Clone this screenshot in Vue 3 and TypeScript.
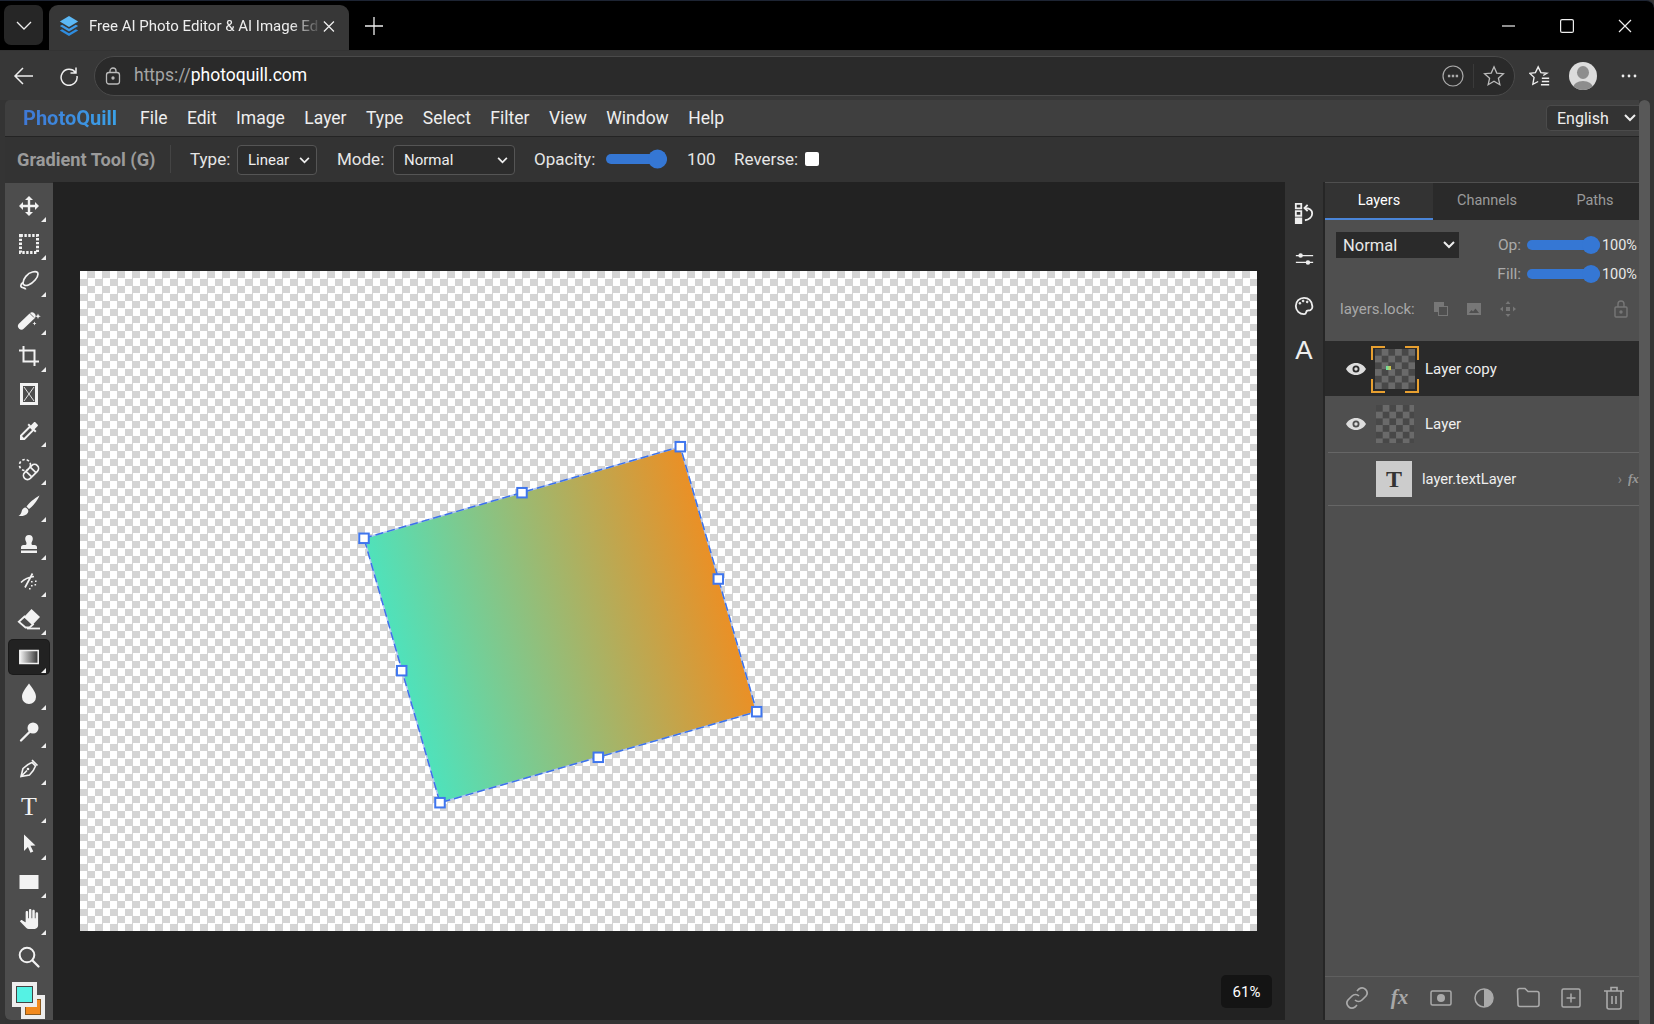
<script setup lang="ts">
interface Tool { name: string; svg: string; more: boolean; active?: boolean }

const S = 'fill="none" stroke="currentColor"'
const tools: Tool[] = [
  { name: 'move', more: true, svg: '<path d="M12 2l4 4h-2.800v4.800H18V8l4 4-4 4v-2.800h-4.800V18H16l-4 4-4-4h2.800v-4.800H6V16l-4-4 4-4v2.800h4.800V6H8z"/>' },
  { name: 'marquee', more: true, svg: `<rect x="3.500" y="3.500" width="17" height="17" ${S} stroke-width="3" stroke-dasharray="2.400 1.500"/>` },
  { name: 'lasso', more: true, svg: `<path ${S} stroke-width="1.700" d="M21 5c0 3.500-4.500 9-9.500 11-2.500 1-5.500.5-5.500-2 0-4 4.500-10 9.500-11 3.500-.7 5.500-.2 5.500 2zM6 13.500c-2.500 1.500-3 4.500-.5 5 1.500.3 3 .5 3 2"/>` },
  { name: 'wand', more: true, svg: '<path d="M4.500 19L15 9" fill="none" stroke="currentColor" stroke-width="7" stroke-linecap="round"/><path d="M12.500 6l4.500 4.500" fill="none" stroke="#4d4d4d" stroke-width=".8"/><path d="M21 6.500l.8 2 2 .8-2 .8-.8 2-.8-2-2-.8 2-.8zM17.500 14.500l.6 1.400 1.400.6-1.400.6-.6 1.400-.6-1.400-1.400-.6 1.400-.6z"/>' },
  { name: 'crop', more: true, svg: `<path ${S} stroke-width="2" d="M6.500 2v15.500H22M2 6.500h15.500V22"/>` },
  { name: 'frame', more: false, svg: '<path fill-rule="evenodd" d="M3 1h18v22H3zM6 4v16h12V4z"/><path fill="none" stroke="currentColor" stroke-width=".9" d="M7 5l10 14M17 5L7 19"/>' },
  { name: 'dropper', more: true, svg: '<path d="M20.710 5.630l-2.340-2.340c-.39-.39-1.020-.39-1.410 0l-3.120 3.120-1.930-1.910-1.410 1.410 1.420 1.420L3 16.250V21h4.750l8.920-8.920 1.420 1.420 1.410-1.410-1.920-1.920 3.120-3.120c.4-.4.4-1.030.01-1.420zM6.920 19L5 17.080l8.060-8.060 1.920 1.920L6.920 19z"/>' },
  { name: 'heal', more: true, svg: `<circle cx="8" cy="8" r="5.500" ${S} stroke-width="1.700" stroke-dasharray="2.500 2"/><g transform="rotate(-45 14 15)"><rect x="5" y="11" width="18" height="8" rx="4" ${S} stroke-width="1.700"/><path ${S} stroke-width="1.700" d="M11 11v8M17 11v8"/></g>` },
  { name: 'brush', more: true, svg: '<path d="M22.500 1.500C17 4.500 12 9 9.500 12.500l2.500 2.500c3.500-2.500 8-7.500 10.500-13.500zM8.500 13.500c-3 .5-3.500 2.500-4 4.500-.3 1.500-1.500 3-3 4 3.500.5 8-.5 9.500-3.500.8-1.800.2-3.800-2.500-5z"/>' },
  { name: 'stamp', more: true, svg: '<path d="M12 3a3.800 3.800 0 0 0-3.800 3.800c0 2.200 1.300 3 1.300 4.700 0 1-.7 1.500-1.500 1.500H6.500A2.500 2.500 0 0 0 4 15.500V17h16v-1.500a2.500 2.500 0 0 0-2.500-2.500H16c-.8 0-1.500-.5-1.500-1.500 0-1.700 1.300-2.500 1.300-4.700A3.800 3.800 0 0 0 12 3zM4 18.500h16V21H4z"/>' },
  { name: 'history', more: true, svg: `<path ${S} stroke-width="1.700" d="M4 13.500c3.500-3.500 8-5.500 13-6M8 18.500L15.500 4.500"/><path d="M14 12h1.600v1.600H14zM18 11.500h1.600v1.600H18zM14 16h1.600v1.600H14zM17.500 15h1.600v1.600h-1.600zM12 19h1.600v1.600H12z"/>` },
  { name: 'eraser', more: true, svg: `<path d="M14.500 2l8.500 8-7 7.500L7.500 9.500z"/><path ${S} stroke-width="1.800" d="M7.500 9.500L16 17.500 12.500 20.500H8.500L1.800 14.800z"/><path ${S} stroke-width="1.800" d="M10 21.500h13"/>` },
  { name: 'gradient', more: true, active: true, svg: '<defs><linearGradient id="gt"><stop offset="0" stop-color="#f4f4f4"/><stop offset="1" stop-color="#333"/></linearGradient></defs><rect x="2.800" y="5.500" width="18.400" height="13" fill="url(#gt)" stroke="currentColor" stroke-width="1.500"/>' },
  { name: 'drop', more: true, svg: '<path d="M12 1.500C8 7 5 10.500 5 15a7 7 0 0 0 14 0c0-4.500-3-8-7-13.500z"/>' },
  { name: 'dodge', more: true, svg: `<circle cx="16" cy="8" r="5.500"/><path ${S} stroke-width="2.300" stroke-linecap="round" d="M13 11.500L4 20.500"/>` },
  { name: 'pen', more: true, svg: `<path ${S} stroke-width="1.600" d="M4 19.500l2-8c3-3 6-5 9-6l3.500 3.500c-1 3-3 6-6 9zM4 19.500l6-6M15 3l5.500 5.500"/><circle cx="11" cy="12" r="1.300" fill="currentColor"/>` },
  { name: 'type', more: true, svg: '<text x="12" y="20" text-anchor="middle" class="tool-t">T</text>' },
  { name: 'select', more: true, svg: '<path d="M7 2.500L18.500 13.500l-5 .3 2.800 5.700-2.800 1.300-2.600-5.800L7 19z"/>' },
  { name: 'rect', more: true, svg: '<rect x="2.500" y="5" width="19" height="14"/>' },
  { name: 'hand', more: true, svg: '<g transform="translate(2 2) scale(.83)"><path d="M23 5.500V20c0 2.200-1.800 4-4 4h-7.300c-1.080 0-2.100-.43-2.850-1.190L1 14.830s1.260-1.230 1.300-1.250c.22-.19.49-.29.79-.29.22 0 .42.06.6.16.04.01 4.310 2.460 4.310 2.460V4c0-.83.67-1.500 1.500-1.500S11 3.170 11 4v7h1V1.500c0-.83.67-1.500 1.500-1.500S15 .67 15 1.500V11h1V2.500c0-.83.67-1.500 1.500-1.500s1.500.67 1.500 1.500V11h1V5.500c0-.83.67-1.500 1.500-1.500s1.500.67 1.500 1.500z"/></g>' },
  { name: 'zoom', more: false, svg: `<circle cx="10" cy="10" r="7.300" ${S} stroke-width="2"/><path ${S} stroke-width="2.300" stroke-linecap="round" d="M15.500 15.500l6 6"/>` },
]

const menus = ['File', 'Edit', 'Image', 'Layer', 'Type', 'Select', 'Filter', 'View', 'Window', 'Help']

// Free-canvas geometry of the transformed layer, in canvas coordinates.
const corners = [[284, 267.3], [600.3, 175.7], [676.7, 440.7], [360, 531.7]]
const mids = [[442, 221.7], [638.3, 308], [518.3, 486.3], [321.7, 399.7]]
const outline = corners.map((p) => p.join(',')).join(' ')
const handles = [...corners, ...mids]
</script>

<template>
  <div class="screen">
    <header class="titlebar">
      <div class="tab-switch">
        <svg width="16" height="16" viewBox="0 0 16 16" fill="none" stroke="#eee" stroke-width="1.300"><path d="M1 5l7 7 7-7" /></svg>
      </div>
      <div class="tab">
        <svg class="favicon" width="22" height="22" viewBox="0 0 24 24">
          <path d="M12 1L2 7l10 6 10-6z" fill="#5cb8f5" />
          <path d="M4.500 10.500L2 12l10 6 10-6-2.500-1.500L12 15z" fill="#3f9be8" />
          <path d="M4.500 15.500L2 17l10 6 10-6-2.500-1.500L12 20z" fill="#2f8de0" />
        </svg>
        <span class="tab-title">Free AI Photo Editor &amp; AI Image Ed</span>
        <svg width="13" height="13" viewBox="0 0 13 13" stroke="#eee" stroke-width="1.400"><path d="M1 1l11 11M12 1L1 12" /></svg>
      </div>
      <svg class="new-tab" width="20" height="20" viewBox="0 0 20 20" stroke="#eee" stroke-width="1.300"><path d="M10 1v18M1 10h18" /></svg>
      <div class="win-controls">
        <svg width="14" height="14" viewBox="0 0 14 14" stroke="#eee" stroke-width="1.200"><path d="M0 7h13" /></svg>
        <svg width="14" height="14" viewBox="0 0 14 14" fill="none" stroke="#eee" stroke-width="1.200"><rect x=".6" y=".6" width="12.800" height="12.800" rx="1.500" /></svg>
        <svg width="14" height="14" viewBox="0 0 14 14" stroke="#eee" stroke-width="1.200"><path d="M1 1l12 12M13 1L1 13" /></svg>
      </div>
    </header>

    <nav class="addressbar">
      <svg class="nav-icon" width="22" height="22" viewBox="0 0 22 22" fill="none" stroke="#eee" stroke-width="1.500"><path d="M20 11H2M10 3l-8 8 8 8" /></svg>
      <svg class="nav-icon" width="20" height="20" viewBox="0 0 20 20" fill="none" stroke="#eee" stroke-width="1.500"><path d="M16.500 6.500A8 8 0 1 0 18 10M17 1.500v5.500h-5.500" /></svg>
      <div class="url-pill">
        <svg width="16" height="18" viewBox="0 0 16 18" fill="none" stroke="#bbb" stroke-width="1.300"><rect x="1.500" y="5.500" width="13" height="11.500" rx="2.500" /><path d="M5 5.500V4a3 3 0 0 1 6 0v1.500" /><circle cx="8" cy="11" r="1" fill="#bbb" /></svg>
        <span class="url"><span class="url-dim">https://</span>photoquill.com</span>
        <svg class="pill-more" width="22" height="22" viewBox="0 0 22 22" fill="none" stroke="#aaa" stroke-width="1.200"><circle cx="11" cy="11" r="10" /><path d="M6.500 10.400h1.200v1.200H6.500zM10.400 10.400h1.200v1.200h-1.200zM14.300 10.400h1.200v1.200h-1.200z" /></svg>
        <span class="pill-sep"></span>
        <svg width="22" height="22" viewBox="0 0 24 24" fill="none" stroke="#bbb" stroke-width="1.400"><path d="M12 2l3 6.800 7.300.7-5.500 4.900 1.600 7.200L12 17.800l-6.400 3.800 1.600-7.200L1.700 9.500 9 8.800z" /></svg>
      </div>
      <div class="addr-right">
        <svg width="22" height="22" viewBox="0 0 24 24" fill="none" stroke="#eee" stroke-width="1.500"><path d="M15.500 11.500L19.500 9l-6.500-.7L10 2 7 8.300.8 9l4.700 4.500L4.200 21l5.800-3M14 14.500h8M14 18h8M13 21.500h9" /></svg>
        <div class="avatar"><span class="avatar-head"></span><span class="avatar-body"></span></div>
        <svg class="more-dots" width="16" height="6" viewBox="0 0 16 6" fill="#eee"><circle cx="2" cy="3" r="1.400" /><circle cx="8" cy="3" r="1.400" /><circle cx="14" cy="3" r="1.400" /></svg>
      </div>
    </nav>

    <div class="page">
      <main class="editor">
        <div class="menubar">
          <span class="logo">PhotoQuill</span>
          <span v-for="m in menus" :key="m" class="menu-item">{{ m }}</span>
          <div class="lang">
            <span>English</span>
            <svg width="12" height="8" viewBox="0 0 12 8" fill="none" stroke="#eee" stroke-width="2"><path d="M1 1l5 5 5-5" /></svg>
          </div>
        </div>

        <div class="optionsbar">
          <span class="tool-name">Gradient Tool (G)</span>
          <span class="opt-sep"></span>
          <span class="opt-label type-label">Type:</span>
          <div class="opt-select select-type">
            <span>Linear</span>
            <svg width="11" height="7" viewBox="0 0 12 8" fill="none" stroke="#eee" stroke-width="2"><path d="M1 1l5 5 5-5" /></svg>
          </div>
          <span class="opt-label mode-label">Mode:</span>
          <div class="opt-select select-mode">
            <span>Normal</span>
            <svg width="11" height="7" viewBox="0 0 12 8" fill="none" stroke="#eee" stroke-width="2"><path d="M1 1l5 5 5-5" /></svg>
          </div>
          <span class="opt-label opacity-label">Opacity:</span>
          <div class="slider slider-opt"><span class="thumb"></span></div>
          <span class="opt-label opacity-value">100</span>
          <span class="opt-label reverse-label">Reverse:</span>
          <span class="checkbox"></span>
        </div>

        <div class="workspace">
          <aside class="toolbox">
            <div class="tool-list">
              <div v-for="t in tools" :key="t.name" class="tool" :class="{ active: t.active, more: t.more }">
                <svg width="24" height="24" viewBox="0 0 24 24" fill="currentColor" v-html="t.svg"></svg>
              </div>
            </div>
            <div class="swatches">
              <span class="swatch swatch-bg"><i></i></span>
              <span class="swatch swatch-fg"><i></i></span>
            </div>
          </aside>

          <section class="stage">
            <div class="canvas">
              <svg class="layer-art" width="1177" height="660" viewBox="0 0 1177 660">
                <defs>
                  <linearGradient id="art" gradientUnits="userSpaceOnUse" x1="321.700" y1="399.700" x2="638.300" y2="308">
                    <stop offset="0" stop-color="#4fe2bb" />
                    <stop offset="1" stop-color="#ea9026" />
                  </linearGradient>
                </defs>
                <polygon :points="outline" fill="url(#art)" stroke="#b4c8f5" stroke-width="1.500" />
                <polygon :points="outline" fill="none" stroke="#3d72e8" stroke-width="1.500" stroke-dasharray="8 4" />
                <rect v-for="(h, i) in handles" :key="i" :x="h[0] - 4.750" :y="h[1] - 4.750" width="9.500" height="9.500" fill="#fff" stroke="#3f76ee" stroke-width="2" />
              </svg>
            </div>
            <div class="zoom-badge">61%</div>
          </section>

          <aside class="dock">
            <svg width="20" height="24" viewBox="0 0 22 24" fill="currentColor">
              <path fill-rule="evenodd" d="M1 1h8v7H1zM3 3v3h4V3zM1 9h8v7H1zM3 11v3h4v-3zM1 17h8v7H1z" />
              <path fill="none" stroke="currentColor" stroke-width="2" d="M15 3l-3.500 3.500L15 10M12 6.500c5 0 8 2.500 8 6s-3 7-8 7.500" />
            </svg>
            <svg width="19" height="18" viewBox="0 0 22 18" fill="currentColor" stroke="currentColor" stroke-width="1.500">
              <path d="M1 5h20M1 13h20" />
              <circle cx="6.500" cy="5" r="2.600" stroke="none" />
              <circle cx="15" cy="13" r="2.600" stroke="none" />
            </svg>
            <svg class="dock-palette" width="20" height="20" viewBox="0 0 22 22" fill="none" stroke="currentColor" stroke-width="2">
              <path d="M11 2a9 9 0 1 0 0 18c3 0 2-2.500 3-3.500 1-1 2.500-.5 4-1 2-1 2.500-3 2-5C19.200 5 16 2 11 2z" />
              <circle cx="6.500" cy="8" r="1" fill="currentColor" stroke-width="1" />
              <circle cx="10" cy="5.500" r="1" fill="currentColor" stroke-width="1" />
              <circle cx="14.500" cy="6.500" r="1" fill="currentColor" stroke-width="1" />
            </svg>
            <span class="dock-a">A</span>
          </aside>

          <aside class="panel">
            <div class="tabs">
              <span class="ptab active">Layers</span>
              <span class="ptab">Channels</span>
              <span class="ptab">Paths</span>
            </div>

            <div class="blend">
              <div class="blend-select">
                <span>Normal</span>
                <svg width="12" height="8" viewBox="0 0 12 8" fill="none" stroke="#eee" stroke-width="2"><path d="M1 1l5 5 5-5" /></svg>
              </div>
              <div class="blend-sliders">
                <div class="bs-row">
                  <span class="bs-label">Op:</span>
                  <div class="slider slider-panel"><span class="thumb"></span></div>
                  <span class="bs-value">100%</span>
                </div>
                <div class="bs-row">
                  <span class="bs-label">Fill:</span>
                  <div class="slider slider-panel"><span class="thumb"></span></div>
                  <span class="bs-value">100%</span>
                </div>
              </div>
            </div>

            <div class="locks">
              <span class="lock-label">layers.lock:</span>
              <svg width="16" height="16" viewBox="0 0 16 16" fill="#777"><path d="M1 1h10v4h4v10H5v-4H1zM6 6v8h8V6z" /></svg>
              <svg width="16" height="16" viewBox="0 0 16 16" fill="#777"><path fill-rule="evenodd" d="M1 2h14v12H1zM3 12h10L9.500 7.500 7 10.500 5.500 9z" /></svg>
              <svg width="18" height="18" viewBox="0 0 18 18" fill="#777"><path d="M9 1l2.500 3h-5zM9 17l-2.500-3h5zM1 9l3-2.500v5zM17 9l-3 2.500v-5zM7 7h4v4H7z" /></svg>
              <svg class="lock-end" width="14" height="18" viewBox="0 0 14 18" fill="none" stroke="#777" stroke-width="1.400"><rect x="1" y="7" width="12" height="10" rx="1" /><path d="M4 7V4a3 3 0 0 1 6 0v3" /><circle cx="7" cy="12" r="1" fill="#777" /></svg>
            </div>

            <div class="layers">
              <div class="layer selected">
                <svg class="eye" width="20" height="14" viewBox="0 0 20 14" fill="#ddd"><path fill-rule="evenodd" d="M10 1C5.500 1 2 3.500 0 7c2 3.500 5.500 6 10 6s8-2.500 10-6c-2-3.500-5.500-6-10-6zm0 2.500a3.500 3.500 0 1 1 0 7 3.500 3.500 0 0 1 0-7zm0 1.800a1.700 1.700 0 1 0 0 3.400 1.700 1.700 0 0 0 0-3.400z" /></svg>
                <div class="thumb-wrap">
                  <span class="bracket tl"></span><span class="bracket tr"></span><span class="bracket bl"></span><span class="bracket br"></span>
                  <div class="layer-thumb"><span class="mini-art"></span></div>
                </div>
                <span class="layer-name">Layer copy</span>
              </div>
              <div class="layer plain">
                <svg class="eye" width="20" height="14" viewBox="0 0 20 14" fill="#ddd"><path fill-rule="evenodd" d="M10 1C5.500 1 2 3.500 0 7c2 3.500 5.500 6 10 6s8-2.500 10-6c-2-3.500-5.500-6-10-6zm0 2.500a3.500 3.500 0 1 1 0 7 3.500 3.500 0 0 1 0-7zm0 1.800a1.700 1.700 0 1 0 0 3.400 1.700 1.700 0 0 0 0-3.400z" /></svg>
                <div class="thumb-wrap"><div class="layer-thumb small"></div></div>
                <span class="layer-name">Layer</span>
              </div>
              <div class="layer text-layer">
                <span class="eye-gap"></span>
                <div class="t-thumb">T</div>
                <span class="layer-name t-name">layer.textLayer</span>
                <span class="chev">›</span>
                <span class="fx-tag">fx</span>
              </div>
            </div>

            <div class="panel-foot">
              <svg width="24" height="24" viewBox="0 0 24 24" fill="none" stroke="currentColor" stroke-width="1.700"><path d="M10 14a5 5 0 0 0 7 0l4-4a5 5 0 0 0-7-7l-2 2M14 10a5 5 0 0 0-7 0l-4 4a5 5 0 0 0 7 7l2-2" /></svg>
              <span class="foot-fx">fx</span>
              <svg width="22" height="16" viewBox="0 0 22 16" fill="none" stroke="currentColor" stroke-width="1.500"><rect x="1" y="1" width="20" height="14" rx="1.500" /><circle cx="11" cy="8" r="4" fill="currentColor" stroke="none" /></svg>
              <svg width="20" height="20" viewBox="0 0 20 20"><circle cx="10" cy="10" r="9" fill="none" stroke="currentColor" stroke-width="1.500" /><path d="M10 1a9 9 0 0 1 0 18z" fill="currentColor" /></svg>
              <svg width="24" height="21" viewBox="0 0 24 21" fill="none" stroke="currentColor" stroke-width="1.600"><path d="M1.500 3.500a2 2 0 0 1 2-2h5.500l3 3h9a2 2 0 0 1 2 2v11a2 2 0 0 1-2 2h-17a2 2 0 0 1-2-2z" /></svg>
              <svg width="20" height="20" viewBox="0 0 20 20" fill="none" stroke="currentColor" stroke-width="1.500"><rect x="1" y="1" width="18" height="18" rx="1.500" /><path d="M10 5.500v9M5.500 10h9" /></svg>
              <svg width="22" height="24" viewBox="0 0 22 24" fill="none" stroke="currentColor" stroke-width="1.600"><path d="M1 5h20M8 5V1.500h6V5M4 5v16a2 2 0 0 0 2 2h10a2 2 0 0 0 2-2V5M9 10v8M13 10v8" /></svg>
            </div>
          </aside>
        </div>
      </main>
      <div class="scroll-track"></div>
    </div>
  </div>
</template>

<style>
html, body { margin: 0; background: #333; }
</style>

<style scoped>
.screen {
  width: 1654px;
  height: 1024px;
  display: flex;
  flex-direction: column;
  overflow: hidden;
  background: #343434;
  font-family: Roboto, "Liberation Sans", sans-serif;
  color: #eee;
}

/* Browser chrome */
.titlebar {
  flex: 0 0 50px;
  box-sizing: border-box;
  display: flex;
  align-items: flex-start;
  background: #000;
  padding: 5px 0 0 4px;
  border-top: 1px solid #1d2433;
  border-top-right-radius: 8px;
}
.tab-switch {
  width: 39px;
  height: 40px;
  margin-top: -1px;
  display: flex;
  align-items: center;
  justify-content: center;
  background: #262626;
  border-radius: 7px;
}
.tab {
  width: 300px;
  height: 45px;
  margin: -1px 0 0 6px;
  box-sizing: border-box;
  display: flex;
  align-items: center;
  padding: 0 14px 3px 9px;
  background: #373737;
  border-radius: 9px 9px 0 0;
  font-size: 15px;
}
.favicon { flex: none; margin-right: 9px; }
.tab-title {
  flex: 1;
  white-space: nowrap;
  margin-right: 5px;
  -webkit-mask-image: linear-gradient(90deg, #000 88%, rgba(0, 0, 0, .15));
  mask-image: linear-gradient(90deg, #000 88%, rgba(0, 0, 0, .15));
}
.new-tab { margin: 10px 0 0 15px; }
.win-controls {
  margin-left: auto;
  display: flex;
  gap: 44px;
  padding: 13px 22px 0 0;
}

.addressbar {
  flex: 0 0 50px;
  box-sizing: border-box;
  display: flex;
  align-items: center;
  padding: 0 17px 0 13px;
  background: #373737;
  border-top: 1px solid #333;
}
.nav-icon { flex: none; margin-right: 24px; }
.nav-icon + .nav-icon { margin-right: 15px; }
.url-pill {
  flex: 1;
  height: 40px;
  box-sizing: border-box;
  display: flex;
  align-items: center;
  gap: 13px;
  padding: 0 9px 2px 10px;
  background: #2a2a2a;
  border: 1px solid #4a4a4a;
  border-radius: 20px;
}
.url-pill > svg { margin-top: 2px; }
.url { font-size: 17.500px; color: #fff; }
.url-dim { color: #a5a5a5; }
.pill-more { margin-left: auto; }
.pill-sep { width: 1px; height: 24px; margin: 2px -4px 0; background: #3a3a3a; }
.addr-right {
  display: flex;
  align-items: center;
  gap: 18px;
  margin-left: 14px;
}
.more-dots { margin-left: 6px; }
.avatar {
  width: 28px;
  height: 28px;
  border-radius: 50%;
  background: #dcdcdc;
  position: relative;
  overflow: hidden;
}
.avatar-head {
  position: absolute;
  left: 8px;
  top: 4px;
  width: 12px;
  height: 13px;
  border-radius: 50%;
  background: #8d8d8d;
}
.avatar-body {
  position: absolute;
  left: 4px;
  top: 19px;
  width: 20px;
  height: 14px;
  border-radius: 50%;
  background: #8d8d8d;
}

/* Page */
.page {
  flex: 1;
  min-height: 0;
  display: flex;
  padding: 0 4px 0 5px;
  background: #343434;
}
.editor {
  flex: 1;
  min-width: 0;
  display: flex;
  flex-direction: column;
}
.scroll-track {
  flex: 0 0 11px;
  background: #585858;
  border-radius: 6px 6px 0 0;
}

.menubar {
  flex: 0 0 37px;
  box-sizing: border-box;
  display: flex;
  align-items: center;
  padding-left: 18px;
  background: #3f3f3f;
  border-bottom: 1px solid #242424;
  font-size: 17.500px;
  border-top-left-radius: 5px;
}
.logo {
  width: 98px;
  margin-right: 19px;
  font-size: 20px;
  font-weight: 700;
  white-space: nowrap;
  background: linear-gradient(90deg, #3f78d6, #3aa3e8);
  -webkit-background-clip: text;
  background-clip: text;
  color: transparent;
}
.menu-item { margin-right: 19.500px; }
.lang {
  margin-left: auto;
  width: 93px;
  height: 26px;
  box-sizing: border-box;
  display: flex;
  align-items: center;
  justify-content: space-between;
  padding: 0 3px 0 10px;
  background: #333;
  border: 1px solid #4b4b4b;
  border-right: 0;
  border-radius: 5px 0 0 5px;
  font-size: 16px;
}

.optionsbar {
  flex: 0 0 45px;
  box-sizing: border-box;
  display: flex;
  align-items: center;
  padding: 0 0 1px 12px;
  background: #333;
  font-size: 17px;
}
.tool-name { font-weight: 700; font-size: 18.200px; color: #9b9b9b; white-space: nowrap; width: 140px; }
.opt-sep { width: 1px; height: 28px; background: #444; margin: 0 19px 0 13px; }
.opt-label { white-space: nowrap; color: #e6e6e6; }
.opt-select {
  height: 30px;
  margin-top: 2px;
  box-sizing: border-box;
  display: flex;
  align-items: center;
  justify-content: space-between;
  padding: 0 6px 0 10px;
  background: #2c2c2c;
  border: 1px solid #555;
  border-radius: 4px;
  font-size: 15px;
}
.type-label { width: 47px; }
.select-type { width: 80px; margin-right: 20px; }
.mode-label { width: 56px; }
.select-mode { width: 122px; margin-right: 19px; }
.opacity-label { width: 72px; }
.slider {
  position: relative;
  border-radius: 6px;
  background: #3577d4;
}
.thumb {
  position: absolute;
  right: 0;
  top: 50%;
  transform: translateY(-50%);
  border-radius: 50%;
  background: #3577d4;
}
.slider-opt { width: 61px; height: 10px; }
.slider-opt .thumb { width: 19px; height: 19px; }
.opacity-value { margin-left: 20px; width: 47px; }
.reverse-label { width: 71px; }
.checkbox {
  width: 14px;
  height: 14px;
  background: #fff;
  border-radius: 2px;
}

.workspace {
  flex: 1;
  min-height: 0;
  display: flex;
  padding-bottom: 4px;
  background: #333;
}

/* Left tools */
.toolbox {
  flex: 0 0 48px;
  box-sizing: border-box;
  display: flex;
  flex-direction: column;
  margin-top: 1px;
  padding: 6px 4px 0;
  background: #4d4d4d;
  border-radius: 0 0 0 6px;
}
.tool-list {
  display: flex;
  flex-direction: column;
  gap: 3.550px;
}
.tool {
  position: relative;
  height: 34px;
  display: flex;
  align-items: center;
  justify-content: center;
  color: #f2f2f2;
  border-radius: 4px;
}
.tool svg { overflow: visible; }
.tool.active { background: #222; box-shadow: 0 0 0 1px #1a1a1a; }
.tool.more::after {
  content: "";
  position: absolute;
  right: 3px;
  bottom: 1px;
  border-style: solid;
  border-width: 0 0 5px 5px;
  border-color: transparent transparent #eee transparent;
}
.tool :deep(.tool-t) { font: 400 26px "Liberation Serif", serif; fill: currentColor; }
.swatches { position: relative; height: 38px; margin-top: 8px; }
.swatch {
  position: absolute;
  width: 24px;
  height: 24px;
  box-sizing: border-box;
  padding: 4px;
  background: #eee;
}
.swatch i { display: block; width: 100%; height: 100%; border: 1px solid #444; box-sizing: border-box; }
.swatch-fg { left: 3px; top: 0; width: 25px; height: 25px; }
.swatch-fg i { background: #55f2e4; }
.swatch-bg { left: 12px; top: 13px; }
.swatch-bg i { background: #f28a1e; border-color: #8a5a20; }

/* Canvas */
.stage {
  flex: 1;
  min-width: 0;
  position: relative;
  box-sizing: border-box;
  padding: 89px 0 0 27px;
  background: #222;
}
.canvas {
  position: relative;
  width: 1177px;
  height: 660px;
  background: repeating-conic-gradient(#d4d4d4 0 25%, #fff 0 50%) 0 0 / 15px 15px;
}
.layer-art { position: absolute; left: 0; top: 0; }
.zoom-badge {
  position: absolute;
  right: 13px;
  bottom: 12px;
  width: 51px;
  height: 33px;
  display: flex;
  align-items: center;
  justify-content: center;
  background: #141414;
  border-radius: 5px;
  font-size: 15px;
  color: #fff;
}

/* Dock */
.dock {
  flex: 0 0 40px;
  box-sizing: border-box;
  display: flex;
  flex-direction: column;
  align-items: center;
  padding-top: 19px;
  gap: 25px;
  background: #333;
  border-right: 2px solid #262626;
  color: #eee;
}
.dock-palette { margin-top: 3px; }
.dock-a { font: 400 26px/26px "Liberation Sans", sans-serif; margin-top: -4px; }

/* Panel */
.panel {
  flex: 0 0 314px;
  min-width: 0;
  overflow: hidden;
  display: flex;
  flex-direction: column;
  background: #4f4f4f;
  color: #e8e8e8;
}
.tabs {
  flex: 0 0 37px;
  display: flex;
  margin-top: 1px;
  background: #2a2a2a;
}
.ptab {
  flex: 0 0 108px;
  box-sizing: border-box;
  display: flex;
  align-items: center;
  justify-content: center;
  border-bottom: 2px solid transparent;
  font-size: 14.500px;
  color: #9a9a9a;
}
.ptab.active {
  color: #fff;
  background: #333;
  border-bottom-color: #4a85d8;
}
.blend {
  display: flex;
  justify-content: space-between;
  padding: 12px 2px 0 11px;
}
.blend-select {
  width: 123px;
  height: 26px;
  box-sizing: border-box;
  display: flex;
  align-items: center;
  justify-content: space-between;
  padding: 0 4px 0 7px;
  background: #2a2a2a;
  font-size: 16.500px;
}
.blend-sliders { display: flex; flex-direction: column; gap: 11px; padding-top: 4px; }
.bs-row { display: flex; align-items: center; height: 18px; }
.bs-label {
  width: 40px;
  text-align: right;
  margin-right: 6px;
  font-size: 15.500px;
  color: #aaa;
}
.slider-panel { width: 73px; height: 10px; }
.slider-panel .thumb { width: 18px; height: 18px; }
.bs-value { width: 37px; font-size: 14.500px; text-align: right; }
.locks {
  display: flex;
  align-items: center;
  height: 28px;
  margin-top: 12px;
  padding: 0 11px 0 15px;
}
.lock-label { font-size: 15px; color: #a8a8a8; width: 93px; }
.locks svg { margin-right: 17px; }
.locks .lock-end { margin: 0 0 0 auto; }
.layers { margin-top: 18px; flex: 1; }
.layer { display: flex; align-items: center; }
.layer.selected { height: 55px; background: #2a2a2a; }
.layer.plain { height: 56px; }
.layer.text-layer { height: 54px; margin-left: 3px; border-top: 1px solid #666; border-bottom: 1px solid #666; box-sizing: border-box; }
.eye { margin-left: 21px; flex: none; }
.eye-gap { width: 48px; flex: none; }
.thumb-wrap {
  position: relative;
  width: 40px;
  height: 40px;
  margin-left: 9px;
  display: flex;
  align-items: center;
  justify-content: center;
}
.layer-thumb {
  position: relative;
  width: 40px;
  height: 40px;
  background: repeating-conic-gradient(#6a6a6a 0 25%, #484848 0 50%) 0 0 / 13.400px 13.400px;
}
.layer-thumb.small { width: 38px; height: 38px; }
.mini-art {
  position: absolute;
  left: 11px;
  top: 17px;
  width: 5px;
  height: 4px;
  background: linear-gradient(90deg, #5fe0b0, #d8c040);
}
.bracket {
  position: absolute;
  width: 12px;
  height: 12px;
  border: 0 solid #e8a030;
  z-index: 1;
}
.bracket.tl { left: -4px; top: -3px; border-width: 2px 0 0 2px; }
.bracket.tr { right: -4px; top: -3px; border-width: 2px 2px 0 0; }
.bracket.bl { left: -4px; bottom: -4px; border-width: 0 0 2px 2px; }
.bracket.br { right: -4px; bottom: -4px; border-width: 0 2px 2px 0; }
.layer-name { margin-left: 10px; font-size: 15px; color: #eee; }
.t-thumb {
  width: 36px;
  height: 36px;
  display: flex;
  align-items: center;
  justify-content: center;
  background: #ccc;
  color: #333;
  font: 700 24px "Liberation Serif", serif;
}
.t-name { margin-left: 10px; font-size: 14.700px; }
.chev { margin-left: auto; color: #888; font-size: 14px; margin-right: 6px; }
.fx-tag { font: italic 700 13px "Liberation Serif", serif; color: #999; width: 11px; overflow: hidden; flex: none; }
.panel-foot {
  flex: 0 0 44px;
  box-sizing: border-box;
  display: flex;
  align-items: center;
  justify-content: space-between;
  padding: 0 14px 2px 20px;
  border-top: 1px solid #5f5f5f;
  color: #aaa;
}
.foot-fx { font: italic 700 21px "Liberation Serif", serif; color: #a8a8a8; }
</style>
